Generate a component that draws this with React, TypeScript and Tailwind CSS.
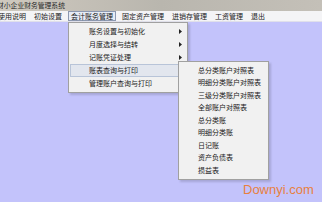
// Accounting system main window with the 会计账务管理 menu open
// Title bar, menu bar, lavender workspace, cascading dropdown menus.

const CJK = { fontFamily: '"Noto Sans CJK SC", "Noto Sans", sans-serif' };

const topMenu = ["使用说明", "初始设置", "会计账务管理", "固定资产管理", "进销存管理", "工资管理", "退出"];

const accountMenu = [
  { label: "账务设置与初始化", active: false },
  { label: "月度选择与结转", active: false },
  { label: "记账凭证处理", active: false },
  { label: "账表查询与打印", active: true },
  { label: "管理账户查询与打印", active: false },
];

const reportMenu = [
  "总分类账户对照表",
  "明细分类账户对照表",
  "三级分类账户对照表",
  "全部账户对照表",
  "总分类账",
  "明细分类账",
  "日记账",
  "资产负债表",
  "损益表",
];

function Arrow() {
  return (
    <svg width="3" height="5" viewBox="0 0 3 5" className="shrink-0">
      <path d="M0 0 L3 2.5 L0 5 Z" fill="#222" />
    </svg>
  );
}

export default function App() {
  return (
    <div
      className="relative w-[322px] h-[202px] overflow-hidden bg-[#c3c3fb] flex flex-col text-[7px] text-[#1a1a1a]"
      style={CJK}
    >
      {/* Title bar (blurred aero) */}
      <div className="h-[11px] flex items-center bg-gradient-to-r from-[#cfc9bf] via-[#b9b6ae] to-[#c4c0b8]">
        <span className="-ml-[3px] text-[6.8px] leading-none text-[#2a2a2a] whitespace-nowrap">财小企业财务管理系统</span>
      </div>

      {/* Menu bar */}
      <div className="h-[11px] flex items-center bg-[#f4f4f6] border-b border-[#e0e0ea] whitespace-nowrap">
        {topMenu.map((m, i) => (
          <div
            key={m}
            className={
              i === 0
                ? "-ml-[2px] pr-[4px] leading-none"
                : i === 2
                ? "h-[10px] flex items-center px-[2px] mx-[2px] border border-[#8c98b0] bg-[#e6ecf6] leading-none"
                : "px-[4px] leading-none"
            }
          >
            {m}
          </div>
        ))}
      </div>

      {/* First dropdown */}
      <div className="absolute left-[68px] top-[22px] w-[120px] py-[2px] bg-[#f1f1f1] border border-[#a0a0a0] shadow-[2px_2px_2px_rgba(0,0,0,0.15)]">
        {accountMenu.map((it) => (
          <div
            key={it.label}
            className={
              "h-[13px] mx-[1px] flex items-center pl-[18px] pr-[3px] " +
              (it.active ? "bg-[#e2e6ee] border border-[#b8c4d8]" : "border border-transparent")
            }
          >
            <span className="flex-1 leading-none whitespace-nowrap">{it.label}</span>
            <Arrow />
          </div>
        ))}
      </div>

      {/* Submenu */}
      <div className="absolute left-[178px] top-[61px] w-[91px] py-[2px] bg-[#f1f1f1] border border-[#a0a0a0] shadow-[2px_2px_2px_rgba(0,0,0,0.15)]">
        {reportMenu.map((r) => (
          <div key={r} className="h-[12.5px] flex items-center pl-[19px] leading-none whitespace-nowrap">
            {r}
          </div>
        ))}
      </div>

      {/* Watermark */}
      <div
        className="absolute left-[243px] top-[183px] text-[13px] leading-none text-[#e8803e]"
        style={{ fontFamily: '"Liberation Sans", Arial, sans-serif' }}
      >
        Downyi.com
      </div>
    </div>
  );
}
